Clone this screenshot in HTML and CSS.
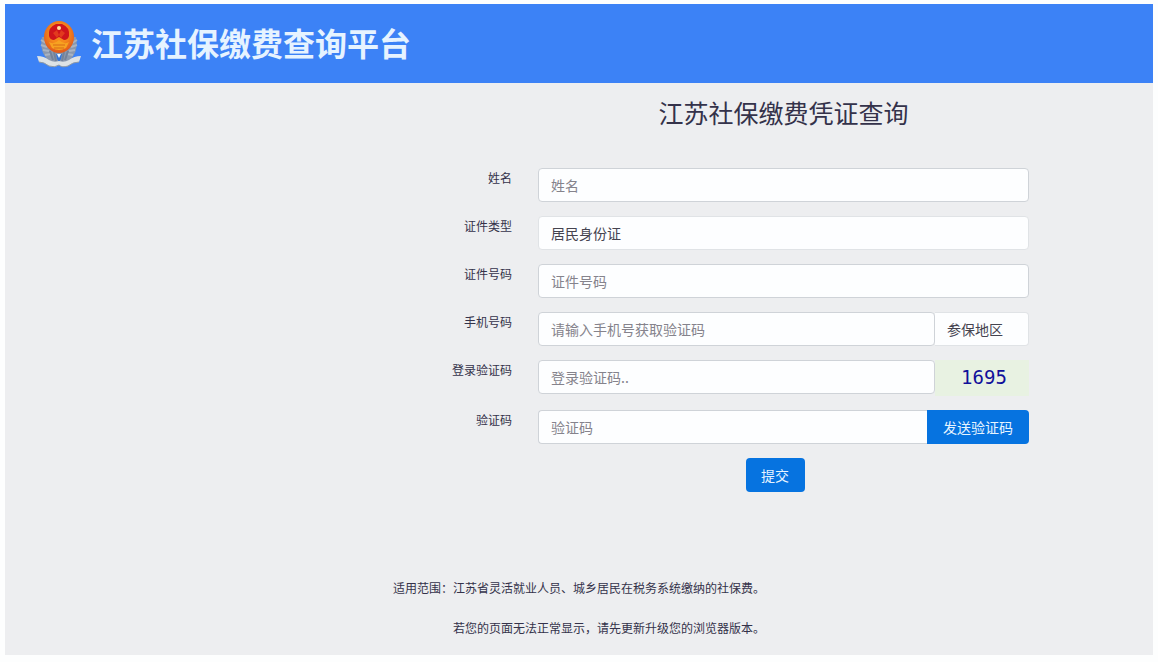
FILE: index.html
```html
<!DOCTYPE html>
<html lang="zh-CN">
<head>
<meta charset="utf-8">
<meta name="viewport" content="width=device-width, initial-scale=1">
<title>江苏社保缴费查询平台</title>
<link rel="stylesheet" href="styles.css">
</head>
<body>
<div class="page">
  <header class="banner">
    <svg class="emblem" viewBox="0 0 46 48" aria-hidden="true">
      <defs>
        <radialGradient id="gold" cx="50%" cy="40%" r="60%">
          <stop offset="0.5" stop-color="#f58a1c"/>
          <stop offset="1" stop-color="#e0561c"/>
        </radialGradient>
      </defs>
      <path d="M6 17 Q3 32 13 41 L22 44 L33 41 Q43 32 40 17 Z" fill="#8b98ad"/>
      <path d="M5 20l5 3M5 25l6 2M7 30l6 1M9 35l6-1M41 20l-5 3M41 25l-6 2M39 30l-6 1M37 35l-6-1" stroke="#a9b3c1" stroke-width="2"/>
      <path d="M14 31l3 9M18 32l2 9M32 31l-3 9M28 32l-2 9" stroke="#73829a" stroke-width="2"/>
      <path d="M20 34h6l-1 5-2 3-2-3z" fill="#3475d8"/>
      <path d="M21 34h4l-2 4z" fill="#f4f7fb"/>
      <path d="M1 36 Q8 36 13 40 Q18 43 23 41 Q28 43 33 40 Q38 36 45 36 L43 42 Q37 42 32 46 Q26 48 23 45 Q19 48 13 46 Q8 42 3 42 Z" fill="#dde2e5"/>
      <path d="M3 42Q8 42 13 46Q19 48 23 45Q26 48 32 46Q37 42 43 42" fill="none" stroke="#8f9aa5" stroke-width="1"/>
      <ellipse cx="23" cy="17" rx="15" ry="16" fill="url(#gold)"/>
      <path d="M13 16 Q12 7 20 4 L26 4 Q34 7 33 16 Q32 20 28 20 L23 17 L18 20 Q14 20 13 16Z" fill="#cf141c"/>
      <path d="M17 13l4-3 2 5-2 3zM29 13l-4-3-2 5 2 3z" fill="#e23a1e"/>
      <circle cx="23" cy="8" r="2" fill="#ffe3a0"/>
      <path d="M13 22q5 3 10-2 5 5 10 2l-3 6q-7 4-14 0z" fill="#f7a221"/>
      <path d="M17 25h12M18 28h10" stroke="#d76a16" stroke-width="1"/>
    </svg>
    <h1 class="banner-title">江苏社保缴费查询平台</h1>
  </header>

  <main>
    <form class="form">
      <h2 class="form-title">江苏社保缴费凭证查询</h2>

      <label class="label" for="name">姓名</label>
      <input class="control" id="name" type="text" placeholder="姓名">

      <label class="label" for="id-type">证件类型</label>
      <select class="control soft" id="id-type"><option>居民身份证</option></select>

      <label class="label" for="id-number">证件号码</label>
      <input class="control" id="id-number" type="text" placeholder="证件号码">

      <label class="label" for="phone">手机号码</label>
      <div class="group">
        <input class="control" id="phone" type="tel" placeholder="请输入手机号获取验证码">
        <select class="control soft area" aria-label="参保地区"><option>参保地区</option></select>
      </div>

      <label class="label" for="login-code">登录验证码</label>
      <div class="group">
        <input class="control" id="login-code" type="text" placeholder="登录验证码..">
        <button class="captcha" type="button">1695</button>
      </div>

      <label class="label" for="sms-code">验证码</label>
      <div class="group">
        <input class="control joined" id="sms-code" type="text" placeholder="验证码">
        <button class="button send" type="button">发送验证码</button>
      </div>

      <div class="actions">
        <button class="button submit" type="submit">提交</button>
      </div>
    </form>
  </main>

  <footer class="notes">
    <div class="notes-body">
      <p>适用范围&#xFF1A;江苏省灵活就业人员、城乡居民在税务系统缴纳的社保费。</p>
      <p class="indented">若您的页面无法正常显示&#xFF0C;请先更新升级您的浏览器版本。</p>
    </div>
  </footer>
</div>
</body>
</html>
```
FILE: styles.css
```css
* {
  box-sizing: border-box;
}

body {
  margin: 0;
  padding: 4px 5px 7px;
  background: #fdfefe;
  color: #34324a;
  font-family: "Noto Sans CJK SC", "Liberation Sans", sans-serif;
  font-size: 14px;
}

.page {
  display: flex;
  flex-direction: column;
  min-height: calc(100vh - 11px);
  background: #edeef0;
}

.banner {
  display: flex;
  align-items: center;
  gap: 9px;
  height: 79px;
  padding: 0 31px;
  background: #3c82f6;
}

.emblem {
  width: 46px;
  height: 48px;
}

.banner-title {
  margin: 0;
  padding-bottom: 4px;
  color: #e6f3ff;
  font-size: 32px;
  font-weight: 700;
  line-height: 48px;
}

.form {
  display: grid;
  grid-template-columns: minmax(0, 507fr) minmax(0, 491fr);
  column-gap: 26px;
  row-gap: 14px;
  align-items: start;
  padding: 11px 124px 0 0;
}

.form-title {
  grid-column: 2;
  margin: 0 0 24px;
  font-size: 25px;
  font-weight: 400;
  line-height: 36px;
  text-align: center;
}

.label {
  font-size: 12px;
  line-height: 20px;
  text-align: right;
}

.control {
  display: block;
  width: 100%;
  min-width: 0;
  height: 34px;
  margin: 0;
  padding: 0 12px;
  border: 1px solid #cfd3d8;
  border-radius: 4px;
  background: #fdfeff;
  color: #45434f;
  font: inherit;
  appearance: none;
}

.control::placeholder {
  color: #85838c;
  opacity: 1;
}

.soft {
  border-color: #e0e3e6;
}

.group {
  display: flex;
}

.group .control {
  flex: 1;
}

.group .area {
  flex: 0 0 94px;
  border-left: 0;
  border-radius: 0 4px 4px 0;
}

.group .joined {
  border-right: 0;
  border-radius: 4px 0 0 4px;
}

.captcha {
  width: 94px;
  height: 36px;
  padding: 0 0 2px 4px;
  border: 0;
  background: #e8f2e2;
  color: #10109a;
  font-family: "DejaVu Sans Mono", monospace;
  font-size: 19px;
}

.button {
  height: 34px;
  padding: 0;
  border: 0;
  border-radius: 4px;
  background: #0673e0;
  color: #e6f4ff;
  font: inherit;
}

.send {
  width: 102px;
  border-radius: 0 4px 4px 0;
}

.submit {
  width: 59px;
}

.actions {
  grid-column: 2;
  padding-right: 17px;
  text-align: center;
}

.notes {
  display: flex;
  justify-content: center;
  margin-top: auto;
  padding-bottom: 17px;
  font-size: 12px;
  line-height: 20px;
}

.notes p {
  margin: 0;
}

.notes .indented {
  margin-top: 20px;
  padding-left: 5em;
}
```
